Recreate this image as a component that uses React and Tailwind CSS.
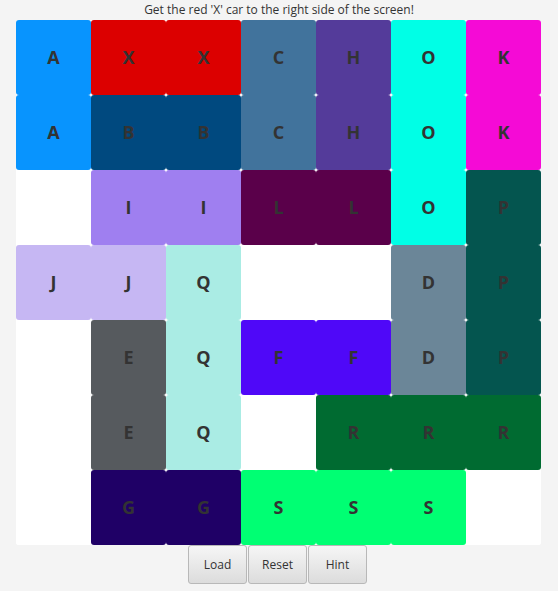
import React from "react";

const C = {
  A: "bg-[#0894fe]",
  X: "bg-[#dc0000]",
  C: "bg-[#41739c]",
  H: "bg-[#543b9a]",
  O: "bg-[#00ffe6]",
  K: "bg-[#f50ad6]",
  B: "bg-[#00497f]",
  I: "bg-[#9f7ff0]",
  L: "bg-[#5a004a]",
  P: "bg-[#04554f]",
  J: "bg-[#c6b7f3]",
  Q: "bg-[#aaece4]",
  D: "bg-[#6b8698]",
  E: "bg-[#565a5e]",
  F: "bg-[#4f08f8]",
  R: "bg-[#006b31]",
  G: "bg-[#1f0066]",
  S: "bg-[#00ff73]",
};

const rows = [
  "AXXCHOK",
  "ABBCHOK",
  ".IILLOP",
  "JJQ..DP",
  ".EQFFDP",
  ".EQ.RRR",
  ".GGSSS.",
];

export default function App() {
  return (
    <div
      className="w-[558px] h-[591px] bg-[#f4f4f4] flex flex-col"
      style={{ fontFamily: "'Open Sans', 'Noto Sans', sans-serif" }}
    >
      <div className="h-[20px] flex items-center justify-center text-[12px] text-[#333] leading-none">
        Get the red 'X' car to the right side of the screen!
      </div>
      <div className="ml-[16px] w-[525px] grid grid-cols-[repeat(7,75px)] grid-rows-[repeat(7,75px)] bg-white rounded-[3px]">
        {rows.flatMap((r, ri) =>
          r.split("").map((ch, ci) =>
            ch === "." ? (
              <div key={ri + "-" + ci} className="bg-white rounded-[3px]" />
            ) : (
              <div
                key={ri + "-" + ci}
                className={`${C[ch]} rounded-[3px] flex items-center justify-center text-[18px] font-bold text-[#333]`}
              >
                {ch}
              </div>
            )
          )
        )}
      </div>
      <div className="ml-[188px] flex gap-[1px]">
        {["Load", "Reset", "Hint"].map((t) => (
          <button
            key={t}
            className="w-[59px] h-[39px] rounded-[3px] border border-[#b8b8b8] bg-gradient-to-b from-[#f6f6f6] to-[#dcdcdc] text-[12px] text-[#333]"
          >
            {t}
          </button>
        ))}
      </div>
    </div>
  );
}
